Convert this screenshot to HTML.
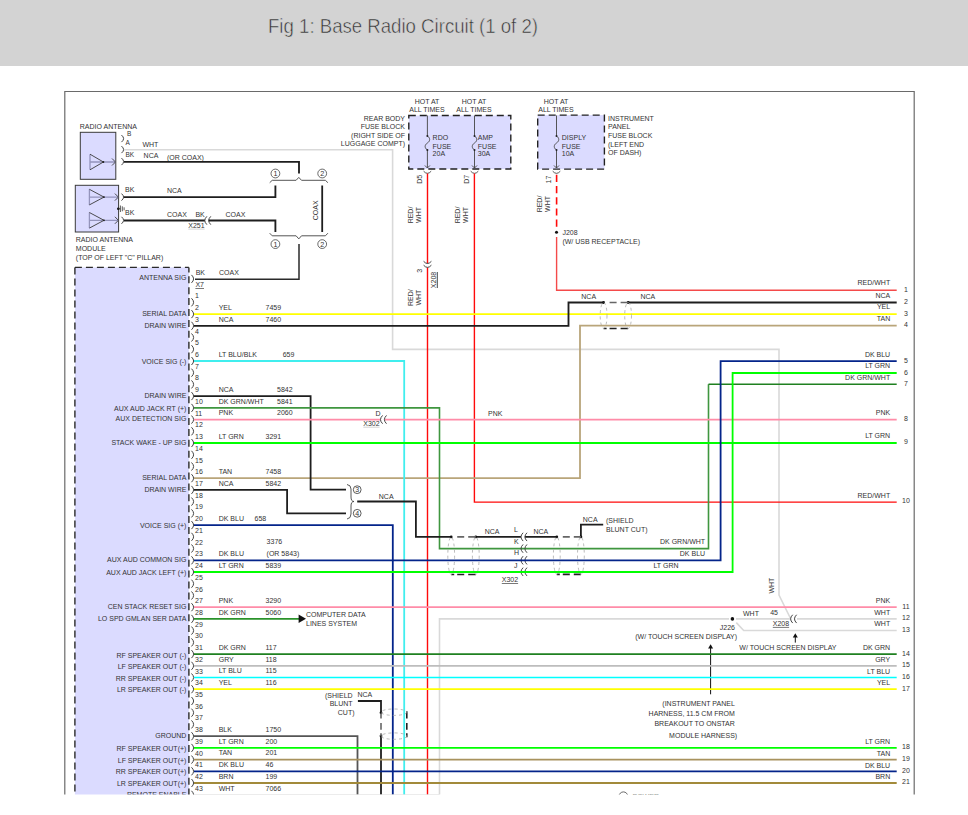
<!DOCTYPE html>
<html><head><meta charset="utf-8"><style>
html,body{margin:0;padding:0;background:#fff;width:968px;height:815px;overflow:hidden}
svg{display:block;font-family:"Liberation Sans",sans-serif}
</style></head><body>
<svg width="968" height="815" viewBox="0 0 968 815">
<defs><clipPath id="clip"><rect x="0" y="66" width="968" height="728.6"/></clipPath></defs>
<rect x="0" y="0" width="968" height="66" fill="#d3d3d3"/>
<text x="268" y="32.8" font-size="19.8" fill="#333" stroke="#d3d3d3" stroke-width="0.55" textLength="270" lengthAdjust="spacingAndGlyphs">Fig 1: Base Radio Circuit (1 of 2)</text>
<g clip-path="url(#clip)">
<path d="M64.8,795 V91.5 H914.2 V795" fill="none" stroke="#6a6a6a" stroke-width="1.2"/>
<text x="79.8" y="128.8" font-size="7" fill="#333">RADIO ANTENNA</text>
<rect x="80.3" y="132.3" width="35.5" height="47" fill="#dbdbff" stroke="#3a3a3a" stroke-width="1"/>
<rect x="75.3" y="185.3" width="43.3" height="46.7" fill="#dbdbff" stroke="#3a3a3a" stroke-width="1"/>
<path d="M90,154.2 V169.8 M90,162 H115.5" fill="none" stroke="#9494bc" stroke-width="1.3"/>
<path d="M90,154.2 L103.4,162 L90,169.8 M112.0,158.5 L115.5,162 L112.0,165.5" fill="none" stroke="#3a3a3a" stroke-width="0.9"/>
<circle cx="103.4" cy="162" r="0.9" fill="#222"/>
<path d="M89.4,189.29999999999998 V204.9 M89.4,197.1 H118.4" fill="none" stroke="#9494bc" stroke-width="1.3"/>
<path d="M89.4,189.29999999999998 L104,197.1 L89.4,204.9 M114.9,193.6 L118.4,197.1 L114.9,200.6" fill="none" stroke="#3a3a3a" stroke-width="0.9"/>
<circle cx="104" cy="197.1" r="0.9" fill="#222"/>
<path d="M89.4,212.5 V228.10000000000002 M89.4,220.3 H118.4" fill="none" stroke="#9494bc" stroke-width="1.3"/>
<path d="M89.4,212.5 L104,220.3 L89.4,228.10000000000002 M114.9,216.8 L118.4,220.3 L114.9,223.8" fill="none" stroke="#3a3a3a" stroke-width="0.9"/>
<circle cx="104" cy="220.3" r="0.9" fill="#222"/>
<circle cx="118.3" cy="208.8" r="1.3" fill="#111"/>
<path d="M118.3,208.8 H120.4 M120.4,205.5 V212 M122.3,206.3 V211.3 M124.1,207.3 V210.3" stroke="#333" stroke-width="0.8"/>
<path d="M121.5,135.1 Q125.7,138.6 121.5,142.1" fill="none" stroke="#444" stroke-width="1"/>
<path d="M121.5,146.1 Q125.7,149.6 121.5,153.1" fill="none" stroke="#444" stroke-width="1"/>
<path d="M121.5,158.1 Q125.7,161.6 121.5,165.1" fill="none" stroke="#444" stroke-width="1"/>
<path d="M121.5,193.6 Q125.7,197.1 121.5,200.6" fill="none" stroke="#444" stroke-width="1"/>
<path d="M121.5,216.8 Q125.7,220.3 121.5,223.8" fill="none" stroke="#444" stroke-width="1"/>
<text x="127.0" y="135.5" font-size="6.5" fill="#333">B</text>
<text x="125.5" y="145.0" font-size="6.5" fill="#333">A</text>
<text x="125.5" y="157.0" font-size="6.5" fill="#333">BK</text>
<text x="142.4" y="146.9" font-size="7" fill="#333">WHT</text>
<text x="143.6" y="157.7" font-size="7" fill="#333">NCA</text>
<text x="167.0" y="160.0" font-size="7" fill="#333">(OR COAX)</text>
<text x="125.0" y="191.5" font-size="7" fill="#333">BK</text>
<text x="167.0" y="192.6" font-size="7" fill="#333">NCA</text>
<text x="125.0" y="214.8" font-size="7" fill="#333">BK</text>
<text x="167.0" y="216.6" font-size="7" fill="#333">COAX</text>
<text x="195.4" y="216.6" font-size="7" fill="#333">BK</text>
<text x="188.3" y="227.6" font-size="7" fill="#333">X251</text>
<path d="M188.3,229.1 h16.3" stroke="#c8c8c8" stroke-width="0.8"/>
<text x="225.5" y="216.6" font-size="7" fill="#333">COAX</text>
<path d="M206.90,216.35 Q202.70,220.50 206.90,224.65" fill="none" stroke="#444" stroke-width="1"/>
<path d="M210.80,216.35 Q206.60,220.50 210.80,224.65" fill="none" stroke="#444" stroke-width="1"/>
<text x="75.8" y="242.0" font-size="7" fill="#333">RADIO ANTENNA</text>
<text x="75.8" y="250.7" font-size="7" fill="#333">MODULE</text>
<text x="75.8" y="259.6" font-size="7" fill="#333">(TOP OF LEFT "C" PILLAR)</text>
<path d="M124.0,149.7 L392.6,149.7 L392.6,349.4 L779.0,349.4 L779.0,595.0 L790.3,618.0" fill="none" stroke="#d9d9d9" stroke-width="1.6"/>
<path d="M124.0,161.9 L299.0,161.9 L299.0,173.5" fill="none" stroke="#1e1e1e" stroke-width="1.85"/>
<path d="M124.0,197.1 L275.4,197.1 L275.4,185.6" fill="none" stroke="#1e1e1e" stroke-width="1.85"/>
<path d="M124.0,220.5 L204.8,220.5" fill="none" stroke="#1e1e1e" stroke-width="1.85"/>
<path d="M208.6,220.5 L275.4,220.5 L275.4,232.0" fill="none" stroke="#1e1e1e" stroke-width="1.85"/>
<path d="M322.2,185.6 L322.2,232.0" fill="none" stroke="#1e1e1e" stroke-width="1.8"/>
<text transform="translate(317.5,210.3) rotate(-90)" text-anchor="middle" font-size="7" fill="#333">COAX</text>
<path d="M269.7,182.7 L272.2,180.3 H296.1 L298.8,177.4 L301.5,180.3 H325.4 L327.9,182.7" fill="none" stroke="#555" stroke-width="1"/>
<path d="M269.7,233.2 L272.2,235.8 H296.1 L298.8,238.9 L301.5,235.8 H325.4 L327.9,233.2" fill="none" stroke="#555" stroke-width="1"/>
<circle cx="275.4" cy="173.5" r="4.4" fill="none" stroke="#444" stroke-width="0.8"/>
<text x="275.4" y="176.1" text-anchor="middle" font-size="7.2" fill="#333">1</text>
<circle cx="322.2" cy="173.5" r="4.4" fill="none" stroke="#444" stroke-width="0.8"/>
<text x="322.2" y="176.1" text-anchor="middle" font-size="7.2" fill="#333">2</text>
<circle cx="275.4" cy="244.1" r="4.4" fill="none" stroke="#444" stroke-width="0.8"/>
<text x="275.4" y="246.7" text-anchor="middle" font-size="7.2" fill="#333">1</text>
<circle cx="322.2" cy="244.1" r="4.4" fill="none" stroke="#444" stroke-width="0.8"/>
<text x="322.2" y="246.7" text-anchor="middle" font-size="7.2" fill="#333">2</text>
<path d="M299.0,244.0 L299.0,279.3 L195.0,279.3" fill="none" stroke="#2a2a2a" stroke-width="1.5"/>
<rect x="74.9" y="267.4" width="114" height="560" fill="#dbdbff"/>
<path d="M74.9,267.4 H188.9" fill="none" stroke="#2a2a2a" stroke-width="1.4" stroke-dasharray="7,4"/>
<path d="M74.9,267.4 V830" fill="none" stroke="#2a2a2a" stroke-width="1.4" stroke-dasharray="7,4"/>
<path d="M188.9,267.4 V830" fill="none" stroke="#2a2a2a" stroke-width="1.4" stroke-dasharray="7,3.9" stroke-dashoffset="2"/>
<text x="186.4" y="280.4" text-anchor="end" font-size="7" fill="#333">ANTENNA SIG</text>
<path d="M191.5,274.9 Q195.7,278.9 191.5,282.9" fill="none" stroke="#444" stroke-width="1"/>
<text x="195.7" y="274.5" font-size="7" fill="#333">BK</text>
<text x="219.0" y="274.5" font-size="7" fill="#333">COAX</text>
<text x="195.4" y="287.0" font-size="7" fill="#333">X7</text>
<path d="M195.4,288.5 h8.6" stroke="#555" stroke-width="0.8"/>
<path d="M191.5,298.3 Q195.7,302.3 191.5,306.3" fill="none" stroke="#444" stroke-width="1"/>
<text x="195.0" y="298.3" font-size="7" fill="#333">1</text>
<path d="M191.5,310.1 Q195.7,314.1 191.5,318.1" fill="none" stroke="#444" stroke-width="1"/>
<text x="195.0" y="310.1" font-size="7" fill="#333">2</text>
<path d="M191.5,321.8 Q195.7,325.8 191.5,329.8" fill="none" stroke="#444" stroke-width="1"/>
<text x="195.0" y="321.8" font-size="7" fill="#333">3</text>
<path d="M191.5,333.5 Q195.7,337.5 191.5,341.5" fill="none" stroke="#444" stroke-width="1"/>
<text x="195.0" y="333.5" font-size="7" fill="#333">4</text>
<path d="M191.5,345.2 Q195.7,349.2 191.5,353.2" fill="none" stroke="#444" stroke-width="1"/>
<text x="195.0" y="345.2" font-size="7" fill="#333">5</text>
<path d="M191.5,357.0 Q195.7,361.0 191.5,365.0" fill="none" stroke="#444" stroke-width="1"/>
<text x="195.0" y="357.0" font-size="7" fill="#333">6</text>
<path d="M191.5,368.7 Q195.7,372.7 191.5,376.7" fill="none" stroke="#444" stroke-width="1"/>
<text x="195.0" y="368.7" font-size="7" fill="#333">7</text>
<path d="M191.5,380.4 Q195.7,384.4 191.5,388.4" fill="none" stroke="#444" stroke-width="1"/>
<text x="195.0" y="380.4" font-size="7" fill="#333">8</text>
<path d="M191.5,392.1 Q195.7,396.1 191.5,400.1" fill="none" stroke="#444" stroke-width="1"/>
<text x="195.0" y="392.1" font-size="7" fill="#333">9</text>
<path d="M191.5,403.9 Q195.7,407.9 191.5,411.9" fill="none" stroke="#444" stroke-width="1"/>
<text x="195.0" y="403.9" font-size="7" fill="#333">10</text>
<path d="M191.5,415.6 Q195.7,419.6 191.5,423.6" fill="none" stroke="#444" stroke-width="1"/>
<text x="195.0" y="415.6" font-size="7" fill="#333">11</text>
<path d="M191.5,427.3 Q195.7,431.3 191.5,435.3" fill="none" stroke="#444" stroke-width="1"/>
<text x="195.0" y="427.3" font-size="7" fill="#333">12</text>
<path d="M191.5,439.0 Q195.7,443.0 191.5,447.0" fill="none" stroke="#444" stroke-width="1"/>
<text x="195.0" y="439.0" font-size="7" fill="#333">13</text>
<path d="M191.5,450.8 Q195.7,454.8 191.5,458.8" fill="none" stroke="#444" stroke-width="1"/>
<text x="195.0" y="450.8" font-size="7" fill="#333">14</text>
<path d="M191.5,462.5 Q195.7,466.5 191.5,470.5" fill="none" stroke="#444" stroke-width="1"/>
<text x="195.0" y="462.5" font-size="7" fill="#333">15</text>
<path d="M191.5,474.2 Q195.7,478.2 191.5,482.2" fill="none" stroke="#444" stroke-width="1"/>
<text x="195.0" y="474.2" font-size="7" fill="#333">16</text>
<path d="M191.5,485.9 Q195.7,489.9 191.5,493.9" fill="none" stroke="#444" stroke-width="1"/>
<text x="195.0" y="485.9" font-size="7" fill="#333">17</text>
<path d="M191.5,497.6 Q195.7,501.6 191.5,505.6" fill="none" stroke="#444" stroke-width="1"/>
<text x="195.0" y="497.6" font-size="7" fill="#333">18</text>
<path d="M191.5,509.4 Q195.7,513.4 191.5,517.4" fill="none" stroke="#444" stroke-width="1"/>
<text x="195.0" y="509.4" font-size="7" fill="#333">19</text>
<path d="M191.5,521.1 Q195.7,525.1 191.5,529.1" fill="none" stroke="#444" stroke-width="1"/>
<text x="195.0" y="521.1" font-size="7" fill="#333">20</text>
<path d="M191.5,532.8 Q195.7,536.8 191.5,540.8" fill="none" stroke="#444" stroke-width="1"/>
<text x="195.0" y="532.8" font-size="7" fill="#333">21</text>
<path d="M191.5,544.5 Q195.7,548.5 191.5,552.5" fill="none" stroke="#444" stroke-width="1"/>
<text x="195.0" y="544.5" font-size="7" fill="#333">22</text>
<path d="M191.5,556.3 Q195.7,560.3 191.5,564.3" fill="none" stroke="#444" stroke-width="1"/>
<text x="195.0" y="556.3" font-size="7" fill="#333">23</text>
<path d="M191.5,568.0 Q195.7,572.0 191.5,576.0" fill="none" stroke="#444" stroke-width="1"/>
<text x="195.0" y="568.0" font-size="7" fill="#333">24</text>
<path d="M191.5,579.7 Q195.7,583.7 191.5,587.7" fill="none" stroke="#444" stroke-width="1"/>
<text x="195.0" y="579.7" font-size="7" fill="#333">25</text>
<path d="M191.5,591.5 Q195.7,595.5 191.5,599.5" fill="none" stroke="#444" stroke-width="1"/>
<text x="195.0" y="591.5" font-size="7" fill="#333">26</text>
<path d="M191.5,603.2 Q195.7,607.2 191.5,611.2" fill="none" stroke="#444" stroke-width="1"/>
<text x="195.0" y="603.2" font-size="7" fill="#333">27</text>
<path d="M191.5,614.9 Q195.7,618.9 191.5,622.9" fill="none" stroke="#444" stroke-width="1"/>
<text x="195.0" y="614.9" font-size="7" fill="#333">28</text>
<path d="M191.5,626.6 Q195.7,630.6 191.5,634.6" fill="none" stroke="#444" stroke-width="1"/>
<text x="195.0" y="626.6" font-size="7" fill="#333">29</text>
<path d="M191.5,638.4 Q195.7,642.4 191.5,646.4" fill="none" stroke="#444" stroke-width="1"/>
<text x="195.0" y="638.4" font-size="7" fill="#333">30</text>
<path d="M191.5,650.1 Q195.7,654.1 191.5,658.1" fill="none" stroke="#444" stroke-width="1"/>
<text x="195.0" y="650.1" font-size="7" fill="#333">31</text>
<path d="M191.5,661.8 Q195.7,665.8 191.5,669.8" fill="none" stroke="#444" stroke-width="1"/>
<text x="195.0" y="661.8" font-size="7" fill="#333">32</text>
<path d="M191.5,673.5 Q195.7,677.5 191.5,681.5" fill="none" stroke="#444" stroke-width="1"/>
<text x="195.0" y="673.5" font-size="7" fill="#333">33</text>
<path d="M191.5,685.2 Q195.7,689.2 191.5,693.2" fill="none" stroke="#444" stroke-width="1"/>
<text x="195.0" y="685.2" font-size="7" fill="#333">34</text>
<path d="M191.5,697.0 Q195.7,701.0 191.5,705.0" fill="none" stroke="#444" stroke-width="1"/>
<text x="195.0" y="697.0" font-size="7" fill="#333">35</text>
<path d="M191.5,708.7 Q195.7,712.7 191.5,716.7" fill="none" stroke="#444" stroke-width="1"/>
<text x="195.0" y="708.7" font-size="7" fill="#333">36</text>
<path d="M191.5,720.4 Q195.7,724.4 191.5,728.4" fill="none" stroke="#444" stroke-width="1"/>
<text x="195.0" y="720.4" font-size="7" fill="#333">37</text>
<path d="M191.5,732.2 Q195.7,736.2 191.5,740.2" fill="none" stroke="#444" stroke-width="1"/>
<text x="195.0" y="732.2" font-size="7" fill="#333">38</text>
<path d="M191.5,743.9 Q195.7,747.9 191.5,751.9" fill="none" stroke="#444" stroke-width="1"/>
<text x="195.0" y="743.9" font-size="7" fill="#333">39</text>
<path d="M191.5,755.6 Q195.7,759.6 191.5,763.6" fill="none" stroke="#444" stroke-width="1"/>
<text x="195.0" y="755.6" font-size="7" fill="#333">40</text>
<path d="M191.5,767.3 Q195.7,771.3 191.5,775.3" fill="none" stroke="#444" stroke-width="1"/>
<text x="195.0" y="767.3" font-size="7" fill="#333">41</text>
<path d="M191.5,779.0 Q195.7,783.0 191.5,787.0" fill="none" stroke="#444" stroke-width="1"/>
<text x="195.0" y="779.0" font-size="7" fill="#333">42</text>
<path d="M191.5,790.8 Q195.7,794.8 191.5,798.8" fill="none" stroke="#444" stroke-width="1"/>
<text x="195.0" y="790.8" font-size="7" fill="#333">43</text>
<text x="186.4" y="316.2" text-anchor="end" font-size="7" fill="#333">SERIAL DATA</text>
<text x="186.4" y="328.0" text-anchor="end" font-size="7" fill="#333">DRAIN WIRE</text>
<text x="186.4" y="364.3" text-anchor="end" font-size="7" fill="#333">VOICE SIG (-)</text>
<text x="186.4" y="398.3" text-anchor="end" font-size="7" fill="#333">DRAIN WIRE</text>
<text x="186.4" y="411.2" text-anchor="end" font-size="7" fill="#333">AUX AUD JACK RT (+)</text>
<text x="186.4" y="420.5" text-anchor="end" font-size="7" fill="#333">AUX DETECTION SIG</text>
<text x="186.4" y="445.2" text-anchor="end" font-size="7" fill="#333">STACK WAKE - UP SIG</text>
<text x="186.4" y="480.4" text-anchor="end" font-size="7" fill="#333">SERIAL DATA</text>
<text x="186.4" y="492.1" text-anchor="end" font-size="7" fill="#333">DRAIN WIRE</text>
<text x="186.4" y="528.1" text-anchor="end" font-size="7" fill="#333">VOICE SIG (+)</text>
<text x="186.4" y="561.5" text-anchor="end" font-size="7" fill="#333">AUX AUD COMMON SIG</text>
<text x="186.4" y="575.2" text-anchor="end" font-size="7" fill="#333">AUX AUD JACK LEFT (+)</text>
<text x="186.4" y="609.4" text-anchor="end" font-size="7" fill="#333">CEN STACK RESET SIG</text>
<text x="186.4" y="621.1" text-anchor="end" font-size="7" fill="#333">LO SPD GMLAN SER DATA</text>
<text x="186.4" y="657.5" text-anchor="end" font-size="7" fill="#333">RF SPEAKER OUT (-)</text>
<text x="186.4" y="669.0" text-anchor="end" font-size="7" fill="#333">LF SPEAKER OUT (-)</text>
<text x="186.4" y="680.9" text-anchor="end" font-size="7" fill="#333">RR SPEAKER OUT (-)</text>
<text x="186.4" y="691.8" text-anchor="end" font-size="7" fill="#333">LR SPEAKER OUT (-)</text>
<text x="186.4" y="738.4" text-anchor="end" font-size="7" fill="#333">GROUND</text>
<text x="186.4" y="751.1" text-anchor="end" font-size="7" fill="#333">RF SPEAKER OUT(+)</text>
<text x="186.4" y="763.0" text-anchor="end" font-size="7" fill="#333">LF SPEAKER OUT(+)</text>
<text x="186.4" y="773.8" text-anchor="end" font-size="7" fill="#333">RR SPEAKER OUT(+)</text>
<text x="186.4" y="786.2" text-anchor="end" font-size="7" fill="#333">LR SPEAKER OUT(+)</text>
<text x="186.4" y="797.0" text-anchor="end" font-size="7" fill="#333">REMOTE ENABLE</text>
<text x="218.7" y="309.9" font-size="7" fill="#333">YEL</text>
<text x="265.5" y="309.9" font-size="7" fill="#333">7459</text>
<text x="218.7" y="321.6" font-size="7" fill="#333">NCA</text>
<text x="265.5" y="321.6" font-size="7" fill="#333">7460</text>
<text x="218.7" y="356.8" font-size="7" fill="#333">LT BLU/BLK</text>
<text x="282.7" y="356.8" font-size="7" fill="#333">659</text>
<text x="218.7" y="391.9" font-size="7" fill="#333">NCA</text>
<text x="277.0" y="391.9" font-size="7" fill="#333">5842</text>
<text x="218.7" y="403.7" font-size="7" fill="#333">DK GRN/WHT</text>
<text x="277.0" y="403.7" font-size="7" fill="#333">5841</text>
<text x="218.7" y="415.4" font-size="7" fill="#333">PNK</text>
<text x="277.0" y="415.4" font-size="7" fill="#333">2060</text>
<text x="218.7" y="438.8" font-size="7" fill="#333">LT GRN</text>
<text x="265.5" y="438.8" font-size="7" fill="#333">3291</text>
<text x="218.7" y="474.0" font-size="7" fill="#333">TAN</text>
<text x="265.5" y="474.0" font-size="7" fill="#333">7458</text>
<text x="218.7" y="485.7" font-size="7" fill="#333">NCA</text>
<text x="265.5" y="485.7" font-size="7" fill="#333">5842</text>
<text x="218.7" y="520.9" font-size="7" fill="#333">DK BLU</text>
<text x="254.5" y="520.9" font-size="7" fill="#333">658</text>
<text x="266.6" y="544.3" font-size="7" fill="#333">3376</text>
<text x="218.7" y="556.1" font-size="7" fill="#333">DK BLU</text>
<text x="266.6" y="556.1" font-size="7" fill="#333">(OR 5843)</text>
<text x="218.7" y="567.8" font-size="7" fill="#333">LT GRN</text>
<text x="265.5" y="567.8" font-size="7" fill="#333">5839</text>
<text x="218.7" y="603.0" font-size="7" fill="#333">PNK</text>
<text x="265.5" y="603.0" font-size="7" fill="#333">3290</text>
<text x="218.7" y="614.7" font-size="7" fill="#333">DK GRN</text>
<text x="265.5" y="614.7" font-size="7" fill="#333">5060</text>
<text x="218.7" y="649.9" font-size="7" fill="#333">DK GRN</text>
<text x="265.5" y="649.9" font-size="7" fill="#333">117</text>
<text x="218.7" y="661.6" font-size="7" fill="#333">GRY</text>
<text x="265.5" y="661.6" font-size="7" fill="#333">118</text>
<text x="218.7" y="673.3" font-size="7" fill="#333">LT BLU</text>
<text x="265.5" y="673.3" font-size="7" fill="#333">115</text>
<text x="218.7" y="685.0" font-size="7" fill="#333">YEL</text>
<text x="265.5" y="685.0" font-size="7" fill="#333">116</text>
<text x="218.7" y="732.0" font-size="7" fill="#333">BLK</text>
<text x="265.5" y="732.0" font-size="7" fill="#333">1750</text>
<text x="218.7" y="743.7" font-size="7" fill="#333">LT GRN</text>
<text x="265.5" y="743.7" font-size="7" fill="#333">200</text>
<text x="218.7" y="755.4" font-size="7" fill="#333">TAN</text>
<text x="265.5" y="755.4" font-size="7" fill="#333">201</text>
<text x="218.7" y="767.1" font-size="7" fill="#333">DK BLU</text>
<text x="265.5" y="767.1" font-size="7" fill="#333">46</text>
<text x="218.7" y="778.8" font-size="7" fill="#333">BRN</text>
<text x="265.5" y="778.8" font-size="7" fill="#333">199</text>
<text x="218.7" y="790.6" font-size="7" fill="#333">WHT</text>
<text x="265.5" y="790.6" font-size="7" fill="#333">7066</text>
<rect x="408.8" y="115.5" width="102" height="53.5" fill="#dbdbff" stroke="#222" stroke-width="1.4" stroke-dasharray="7,4"/>
<rect x="537.7" y="115.1" width="66.7" height="54" fill="#dbdbff" stroke="#222" stroke-width="1.4" stroke-dasharray="7,4"/>
<path d="M427.4,115.5 V136 C430.4,138 430.4,141 427.4,143 C424.4,145 424.4,148 427.4,150 V168 M424.9,165.5 L427.4,168 L429.9,165.5" fill="none" stroke="#444" stroke-width="0.9"/>
<circle cx="427.4" cy="136" r="1" fill="#222"/><circle cx="427.4" cy="150" r="1" fill="#222"/>
<path d="M474.5,115.5 V136 C477.5,138 477.5,141 474.5,143 C471.5,145 471.5,148 474.5,150 V168 M472.0,165.5 L474.5,168 L477.0,165.5" fill="none" stroke="#444" stroke-width="0.9"/>
<circle cx="474.5" cy="136" r="1" fill="#222"/><circle cx="474.5" cy="150" r="1" fill="#222"/>
<path d="M556.5,115.5 V136 C559.5,138 559.5,141 556.5,143 C553.5,145 553.5,148 556.5,150 V168 M554.0,165.5 L556.5,168 L559.0,165.5" fill="none" stroke="#444" stroke-width="0.9"/>
<circle cx="556.5" cy="136" r="1" fill="#222"/><circle cx="556.5" cy="150" r="1" fill="#222"/>
<text x="427.0" y="104.0" text-anchor="middle" font-size="7" fill="#333">HOT AT</text>
<text x="427.0" y="111.8" text-anchor="middle" font-size="7" fill="#333">ALL TIMES</text>
<text x="474.0" y="104.0" text-anchor="middle" font-size="7" fill="#333">HOT AT</text>
<text x="474.0" y="111.8" text-anchor="middle" font-size="7" fill="#333">ALL TIMES</text>
<text x="556.0" y="104.0" text-anchor="middle" font-size="7" fill="#333">HOT AT</text>
<text x="556.0" y="111.8" text-anchor="middle" font-size="7" fill="#333">ALL TIMES</text>
<text x="405.0" y="120.7" text-anchor="end" font-size="7" fill="#333">REAR BODY</text>
<text x="405.0" y="129.3" text-anchor="end" font-size="7" fill="#333">FUSE BLOCK</text>
<text x="405.0" y="137.6" text-anchor="end" font-size="7" fill="#333">(RIGHT SIDE OF</text>
<text x="405.0" y="146.3" text-anchor="end" font-size="7" fill="#333">LUGGAGE COMPT)</text>
<text x="432.6" y="139.8" font-size="7" fill="#333">RDO</text>
<text x="432.6" y="148.6" font-size="7" fill="#333">FUSE</text>
<text x="432.6" y="156.0" font-size="7" fill="#333">20A</text>
<text x="477.8" y="139.8" font-size="7" fill="#333">AMP</text>
<text x="477.8" y="148.6" font-size="7" fill="#333">FUSE</text>
<text x="477.8" y="156.0" font-size="7" fill="#333">30A</text>
<text x="561.8" y="140.0" font-size="7" fill="#333">DISPLY</text>
<text x="561.8" y="148.9" font-size="7" fill="#333">FUSE</text>
<text x="561.8" y="155.8" font-size="7" fill="#333">10A</text>
<text x="608.0" y="120.8" font-size="7" fill="#333">INSTRUMENT</text>
<text x="608.0" y="129.3" font-size="7" fill="#333">PANEL</text>
<text x="608.0" y="137.7" font-size="7" fill="#333">FUSE BLOCK</text>
<text x="608.0" y="146.5" font-size="7" fill="#333">(LEFT END</text>
<text x="608.0" y="155.4" font-size="7" fill="#333">OF DASH)</text>
<path d="M423.59999999999997,171.2 Q427.4,175.5 431.2,171.2" fill="none" stroke="#444" stroke-width="0.9"/>
<path d="M470.7,171.2 Q474.5,175.5 478.3,171.2" fill="none" stroke="#444" stroke-width="0.9"/>
<path d="M552.7,171.2 Q556.5,175.5 560.3,171.2" fill="none" stroke="#444" stroke-width="0.9"/>
<text transform="translate(422.0,179.3) rotate(-90)" text-anchor="middle" font-size="7" fill="#333">D5</text>
<text transform="translate(469.0,179.3) rotate(-90)" text-anchor="middle" font-size="7" fill="#333">D7</text>
<text transform="translate(550.5,179.6) rotate(-90)" text-anchor="middle" font-size="7" fill="#333">17</text>
<text transform="translate(413.0,215.0) rotate(-90)" text-anchor="middle" font-size="7" fill="#333">RED/</text>
<text transform="translate(420.5,215.0) rotate(-90)" text-anchor="middle" font-size="7" fill="#333">WHT</text>
<text transform="translate(460.0,215.0) rotate(-90)" text-anchor="middle" font-size="7" fill="#333">RED/</text>
<text transform="translate(467.5,215.0) rotate(-90)" text-anchor="middle" font-size="7" fill="#333">WHT</text>
<text transform="translate(542.0,204.0) rotate(-90)" text-anchor="middle" font-size="7" fill="#333">RED/</text>
<text transform="translate(550.0,204.0) rotate(-90)" text-anchor="middle" font-size="7" fill="#333">WHT</text>
<text transform="translate(413.0,297.6) rotate(-90)" text-anchor="middle" font-size="7" fill="#333">RED/</text>
<text transform="translate(420.5,297.6) rotate(-90)" text-anchor="middle" font-size="7" fill="#333">WHT</text>
<path d="M427.5,173.5 L427.5,263.5" fill="none" stroke="#ff0a0a" stroke-width="1.4"/>
<path d="M427.5,267.4 L427.5,800.0" fill="none" stroke="#ff0a0a" stroke-width="1.4"/>
<path d="M423.60,261.30 Q427.50,265.70 431.40,261.30" fill="none" stroke="#444" stroke-width="1"/>
<path d="M423.60,265.20 Q427.50,269.60 431.40,265.20" fill="none" stroke="#444" stroke-width="1"/>
<text transform="translate(422.0,270.7) rotate(-90)" text-anchor="middle" font-size="7" fill="#333">3</text>
<g transform="translate(435.5,280) rotate(-90)"><text x="0" y="0" text-anchor="middle" font-size="7" fill="#333">X208</text><path d="M-8,1.8 h16" stroke="#333" stroke-width="0.9"/></g>
<path d="M474.4,173.5 L474.4,502.1 L896.7,502.1" fill="none" stroke="#ff0a0a" stroke-width="1.4"/>
<path d="M556.6,174.8 L556.6,227.0" fill="none" stroke="#ff0a0a" stroke-width="1.6" stroke-dasharray="7.2,4"/>
<circle cx="556.5" cy="232.3" r="1.5" fill="#111"/>
<path d="M556.6,237.0 L556.6,290.3 L896.7,290.3" fill="none" stroke="#f44a4a" stroke-width="1.4"/>
<text x="562.4" y="235.0" font-size="7" fill="#333">J208</text>
<text x="562.4" y="243.8" font-size="7" fill="#333">(W/ USB RECEPTACLE)</text>
<path d="M194.0,314.1 L896.7,314.1" fill="none" stroke="#ffff00" stroke-width="1.8"/>
<path d="M194.0,325.8 L568.5,325.8 L568.5,302.5 L603.6,302.5" fill="none" stroke="#1e1e1e" stroke-width="1.85"/>
<path d="M628.1,302.5 L896.7,302.5" fill="none" stroke="#1e1e1e" stroke-width="1.85"/>
<circle cx="603.6" cy="302.5" r="1.4" fill="#111"/><circle cx="628.1" cy="302.5" r="1.4" fill="#111"/>
<path d="M609.6,302.5 H616.6 M620.6,302.5 H628.1" stroke="#666" stroke-width="1.6"/>
<path d="M603.6,328.5 H606.6 M609.6,328.5 H616.6 M620.6,328.5 H628.1" stroke="#222" stroke-width="1.6"/>
<ellipse cx="603.6" cy="315.5" rx="3.4" ry="13.0" fill="none" stroke="#aaa" stroke-width="0.8" stroke-dasharray="3,3"/>
<ellipse cx="628.1" cy="315.5" rx="3.4" ry="13.0" fill="none" stroke="#aaa" stroke-width="0.8" stroke-dasharray="3,3"/>
<text x="581.3" y="298.8" font-size="7" fill="#333">NCA</text>
<text x="640.4" y="298.8" font-size="7" fill="#333">NCA</text>
<path d="M896.7,325.6 L580.0,325.6 L580.0,478.2 L194.0,478.2" fill="none" stroke="#b9a57a" stroke-width="1.8"/>
<path d="M194.0,361.0 L404.2,361.0 L404.2,800.0" fill="none" stroke="#40eeee" stroke-width="1.8"/>
<path d="M194.0,396.1 L310.6,396.1 L310.6,489.7 L346.0,489.7" fill="none" stroke="#1e1e1e" stroke-width="1.8"/>
<path d="M194.0,407.9 L439.5,407.9 L439.5,548.6 L708.5,548.6 L708.5,384.3" fill="none" stroke="#3f963f" stroke-width="1.6"/>
<path d="M708.5,384.3 L896.7,384.3" fill="none" stroke="#1f8020" stroke-width="1.6"/>
<path d="M194.0,419.6 L380.5,419.6" fill="none" stroke="#ff8ca8" stroke-width="1.8"/>
<path d="M384.4,419.6 L896.7,419.6" fill="none" stroke="#ff8ca8" stroke-width="1.8"/>
<path d="M382.60,415.43 Q378.40,419.58 382.60,423.73" fill="none" stroke="#444" stroke-width="1"/>
<path d="M386.50,415.43 Q382.30,419.58 386.50,423.73" fill="none" stroke="#444" stroke-width="1"/>
<text x="375.4" y="415.5" font-size="7" fill="#333">D</text>
<text x="363.3" y="425.7" font-size="7" fill="#333">X302</text>
<path d="M363.3,427.2 h16.3" stroke="#c8c8c8" stroke-width="0.8"/>
<text x="488.0" y="415.5" font-size="7" fill="#333">PNK</text>
<path d="M194.0,443.0 L896.7,443.0" fill="none" stroke="#00ff00" stroke-width="1.8"/>
<path d="M194.0,489.9 L287.1,489.9 L287.1,513.3 L346.0,513.3" fill="none" stroke="#1e1e1e" stroke-width="1.8"/>
<path d="M347,484.5 Q351,485 351,489 V497 Q351,501.5 354,501.5 Q351,501.5 351,506 V514 Q351,518.5 347,519" fill="none" stroke="#444" stroke-width="0.9"/>
<circle cx="357.2" cy="489.7" r="3.9" fill="white" stroke="#333" stroke-width="0.8"/>
<text x="357.2" y="492.2" text-anchor="middle" font-size="7" fill="#333">3</text>
<circle cx="357.2" cy="513.3" r="3.9" fill="white" stroke="#333" stroke-width="0.8"/>
<text x="357.2" y="515.8" text-anchor="middle" font-size="7" fill="#333">4</text>
<path d="M357.2,501.5 L415.9,501.5 L415.9,536.9 L451.2,536.9" fill="none" stroke="#1e1e1e" stroke-width="1.8"/>
<path d="M580.9,536.9 L580.9,524.7 L603.2,524.7" fill="none" stroke="#1e1e1e" stroke-width="1.8"/>
<path d="M475.8,536.9 L521.0,536.9" fill="none" stroke="#1e1e1e" stroke-width="1.8"/>
<path d="M524.9,536.9 L556.8,536.9" fill="none" stroke="#1e1e1e" stroke-width="1.8"/>
<circle cx="451.2" cy="536.9" r="1.4" fill="#111"/><circle cx="475.8" cy="536.9" r="1.4" fill="#111"/>
<path d="M457.2,536.9 H464.2 M468.2,536.9 H475.8" stroke="#666" stroke-width="1.6"/>
<path d="M451.2,574.5 H454.2 M457.2,574.5 H464.2 M468.2,574.5 H475.8" stroke="#222" stroke-width="1.6"/>
<ellipse cx="451.2" cy="555.7" rx="3.4" ry="18.8" fill="none" stroke="#aaa" stroke-width="0.8" stroke-dasharray="3,3"/>
<ellipse cx="475.8" cy="555.7" rx="3.4" ry="18.8" fill="none" stroke="#aaa" stroke-width="0.8" stroke-dasharray="3,3"/>
<circle cx="556.8" cy="536.9" r="1.4" fill="#111"/><circle cx="580.9" cy="536.9" r="1.4" fill="#111"/>
<path d="M562.8,536.9 H569.8 M573.8,536.9 H580.9" stroke="#666" stroke-width="1.6"/>
<path d="M556.8,574.4 H559.8 M562.8,574.4 H569.8 M573.8,574.4 H580.9" stroke="#222" stroke-width="1.6"/>
<ellipse cx="556.8" cy="555.6" rx="3.4" ry="18.8" fill="none" stroke="#aaa" stroke-width="0.8" stroke-dasharray="3,3"/>
<ellipse cx="580.9" cy="555.6" rx="3.4" ry="18.8" fill="none" stroke="#aaa" stroke-width="0.8" stroke-dasharray="3,3"/>
<text x="378.8" y="498.6" font-size="7" fill="#333">NCA</text>
<text x="484.7" y="533.7" font-size="7" fill="#333">NCA</text>
<text x="533.4" y="533.7" font-size="7" fill="#333">NCA</text>
<text x="582.8" y="521.9" font-size="7" fill="#333">NCA</text>
<text x="606.0" y="522.7" font-size="7" fill="#333">(SHIELD</text>
<text x="606.0" y="531.6" font-size="7" fill="#333">BLUNT CUT)</text>
<text x="513.9" y="532.4" font-size="7" fill="#333">L</text>
<text x="513.9" y="543.9" font-size="7" fill="#333">K</text>
<text x="513.9" y="554.7" font-size="7" fill="#333">H</text>
<text x="513.9" y="567.7" font-size="7" fill="#333">J</text>
<path d="M523.10,532.75 Q518.90,536.90 523.10,541.05" fill="none" stroke="#444" stroke-width="1"/>
<path d="M527.00,532.75 Q522.80,536.90 527.00,541.05" fill="none" stroke="#444" stroke-width="1"/>
<path d="M523.10,544.45 Q518.90,548.60 523.10,552.75" fill="none" stroke="#444" stroke-width="1"/>
<path d="M527.00,544.45 Q522.80,548.60 527.00,552.75" fill="none" stroke="#444" stroke-width="1"/>
<path d="M523.10,556.15 Q518.90,560.30 523.10,564.45" fill="none" stroke="#444" stroke-width="1"/>
<path d="M527.00,556.15 Q522.80,560.30 527.00,564.45" fill="none" stroke="#444" stroke-width="1"/>
<path d="M523.10,567.65 Q518.90,571.80 523.10,575.95" fill="none" stroke="#444" stroke-width="1"/>
<path d="M527.00,567.65 Q522.80,571.80 527.00,575.95" fill="none" stroke="#444" stroke-width="1"/>
<text x="501.8" y="582.0" font-size="7" fill="#333">X302</text>
<path d="M501.8,583.5 h16.3" stroke="#555" stroke-width="0.8"/>
<path d="M194.0,525.1 L392.8,525.1 L392.8,800.0" fill="none" stroke="#04248a" stroke-width="1.8"/>
<path d="M194.0,560.3 L720.6,560.3 L720.6,361.2 L896.7,361.2" fill="none" stroke="#04248a" stroke-width="1.8"/>
<path d="M194.0,572.0 L732.6,572.0 L732.6,373.0 L896.7,373.0" fill="none" stroke="#00ff00" stroke-width="1.8"/>
<text x="705.1" y="543.7" text-anchor="end" font-size="7" fill="#333">DK GRN/WHT</text>
<text x="705.1" y="555.8" text-anchor="end" font-size="7" fill="#333">DK BLU</text>
<text x="678.5" y="567.9" text-anchor="end" font-size="7" fill="#333">LT GRN</text>
<path d="M194.0,607.2 L896.7,607.2" fill="none" stroke="#ff8ca8" stroke-width="1.8"/>
<path d="M194.0,618.9 L300.0,618.9" fill="none" stroke="#2a922a" stroke-width="1.8"/>
<path d="M298.6,614.4 L306,618.7 L298.6,623 Z" fill="#111"/>
<text x="306.0" y="616.6" font-size="7" fill="#333">COMPUTER DATA</text>
<text x="306.0" y="625.6" font-size="7" fill="#333">LINES SYSTEM</text>
<path d="M439.5,794.8 L439.5,618.9 L729.0,618.9" fill="none" stroke="#d9d9d9" stroke-width="1.6"/>
<path d="M736.0,618.9 L790.0,618.9" fill="none" stroke="#d9d9d9" stroke-width="1.6"/>
<path d="M797.0,618.9 L896.7,618.9" fill="none" stroke="#d9d9d9" stroke-width="1.6"/>
<path d="M736.3,622.6 L743.7,630.5 L896.7,630.5" fill="none" stroke="#d9d9d9" stroke-width="1.6"/>
<circle cx="732.4" cy="618.9" r="1.8" fill="#111"/>
<path d="M792.70,614.75 Q788.50,618.90 792.70,623.05" fill="none" stroke="#444" stroke-width="1"/>
<path d="M796.60,614.75 Q792.40,618.90 796.60,623.05" fill="none" stroke="#444" stroke-width="1"/>
<text x="743.0" y="615.7" font-size="7" fill="#333">WHT</text>
<text x="770.2" y="614.6" font-size="7" fill="#333">45</text>
<text x="772.8" y="625.9" font-size="7" fill="#333">X208</text>
<path d="M772.8,627.4 h16.3" stroke="#555" stroke-width="0.8"/>
<text x="735.0" y="629.6" text-anchor="end" font-size="7" fill="#333">J226</text>
<text x="737.1" y="639.0" text-anchor="end" font-size="7" fill="#333">(W/ TOUCH SCREEN DISPLAY)</text>
<text transform="translate(774.0,585.6) rotate(-90)" text-anchor="middle" font-size="7" fill="#333">WHT</text>
<path d="M795.3,642.6 L795.3,636.0" fill="none" stroke="#111" stroke-width="1"/>
<path d="M792.8,637.5 L795.3,633.3 L797.8,637.5 Z" fill="#111"/>
<text x="739.3" y="650.0" font-size="7" fill="#333">W/ TOUCH SCREEN DISPLAY</text>
<path d="M710.6,694.3 L710.6,647.0" fill="none" stroke="#111" stroke-width="1"/>
<path d="M708.1,648.5 L710.6,644.3 L713.1,648.5 Z" fill="#111"/>
<text x="734.8" y="705.8" text-anchor="end" font-size="7" fill="#333">(INSTRUMENT PANEL</text>
<text x="734.8" y="715.6" text-anchor="end" font-size="7" fill="#333">HARNESS, 11.5 CM FROM</text>
<text x="734.8" y="725.7" text-anchor="end" font-size="7" fill="#333">BREAKOUT TO ONSTAR</text>
<text x="737.2" y="737.8" text-anchor="end" font-size="7" fill="#333">MODULE HARNESS)</text>
<path d="M194.0,654.1 L896.7,654.1" fill="none" stroke="#1f8020" stroke-width="1.8"/>
<path d="M194.0,665.8 L896.7,665.8" fill="none" stroke="#bdbdbd" stroke-width="1.8"/>
<path d="M194.0,677.5 L896.7,677.5" fill="none" stroke="#00ffff" stroke-width="1.6"/>
<path d="M194.0,689.2 L896.7,689.2" fill="none" stroke="#ffff00" stroke-width="1.8"/>
<text x="352.6" y="697.9" text-anchor="end" font-size="7" fill="#333">(SHIELD</text>
<text x="352.6" y="706.0" text-anchor="end" font-size="7" fill="#333">BLUNT</text>
<text x="354.5" y="714.7" text-anchor="end" font-size="7" fill="#333">CUT)</text>
<text x="357.5" y="696.9" font-size="7" fill="#333">NCA</text>
<path d="M357.9,701.0 L381.0,701.0 L381.0,712.8" fill="none" stroke="#1e1e1e" stroke-width="1.8"/>
<circle cx="381" cy="712.8" r="1.4" fill="#111"/><circle cx="381" cy="736.1" r="1.4" fill="#111"/>
<path d="M381,713.4 V718.6 M381,722.9 V729.7 M381,733.3 V736.1" stroke="#666" stroke-width="1.6"/>
<path d="M381.0,736.1 L381.0,800.0" fill="none" stroke="#1e1e1e" stroke-width="1.8"/>
<path d="M406.8,711.3 V718.6 M406.8,722.9 V729.7 M406.8,733.3 V737.3" stroke="#222" stroke-width="1.6"/>
<ellipse cx="394" cy="712.2" rx="13" ry="3.2" fill="none" stroke="#aaa" stroke-width="0.8" stroke-dasharray="3,3"/>
<ellipse cx="394" cy="736.1" rx="13" ry="3.2" fill="none" stroke="#aaa" stroke-width="0.8" stroke-dasharray="3,3"/>
<path d="M194.0,736.2 L357.5,736.2 L357.5,800.0" fill="none" stroke="#555" stroke-width="1.8"/>
<path d="M194.0,747.9 L896.7,747.9" fill="none" stroke="#00ff00" stroke-width="1.8"/>
<path d="M194.0,759.6 L896.7,759.6" fill="none" stroke="#a8925e" stroke-width="1.7"/>
<path d="M194.0,771.3 L896.7,771.3" fill="none" stroke="#04248a" stroke-width="1.8"/>
<path d="M194.0,783.0 L896.7,783.0" fill="none" stroke="#a28a3a" stroke-width="1.8"/>
<path d="M194.0,794.8 L439.5,794.8" fill="none" stroke="#d9d9d9" stroke-width="1.6"/>
<circle cx="623.4" cy="796.3" r="4.4" fill="none" stroke="#444" stroke-width="0.8"/>
<text x="632.5" y="798.6" font-size="7" fill="#333">POWER</text>
<text x="890.2" y="285.4" text-anchor="end" font-size="7" fill="#333">RED/WHT</text>
<text x="906.0" y="291.8" text-anchor="middle" font-size="7" fill="#333">1</text>
<text x="890.2" y="297.6" text-anchor="end" font-size="7" fill="#333">NCA</text>
<text x="906.0" y="304.0" text-anchor="middle" font-size="7" fill="#333">2</text>
<text x="890.2" y="309.3" text-anchor="end" font-size="7" fill="#333">YEL</text>
<text x="906.0" y="315.6" text-anchor="middle" font-size="7" fill="#333">3</text>
<text x="890.2" y="320.8" text-anchor="end" font-size="7" fill="#333">TAN</text>
<text x="906.0" y="327.1" text-anchor="middle" font-size="7" fill="#333">4</text>
<text x="890.2" y="356.5" text-anchor="end" font-size="7" fill="#333">DK BLU</text>
<text x="906.0" y="362.7" text-anchor="middle" font-size="7" fill="#333">5</text>
<text x="890.2" y="368.3" text-anchor="end" font-size="7" fill="#333">LT GRN</text>
<text x="906.0" y="374.5" text-anchor="middle" font-size="7" fill="#333">6</text>
<text x="890.2" y="379.6" text-anchor="end" font-size="7" fill="#333">DK GRN/WHT</text>
<text x="906.0" y="385.8" text-anchor="middle" font-size="7" fill="#333">7</text>
<text x="890.2" y="415.3" text-anchor="end" font-size="7" fill="#333">PNK</text>
<text x="906.0" y="421.4" text-anchor="middle" font-size="7" fill="#333">8</text>
<text x="890.2" y="438.3" text-anchor="end" font-size="7" fill="#333">LT GRN</text>
<text x="906.0" y="444.4" text-anchor="middle" font-size="7" fill="#333">9</text>
<text x="890.2" y="497.5" text-anchor="end" font-size="7" fill="#333">RED/WHT</text>
<text x="906.0" y="503.4" text-anchor="middle" font-size="7" fill="#333">10</text>
<text x="890.2" y="603.0" text-anchor="end" font-size="7" fill="#333">PNK</text>
<text x="906.0" y="608.7" text-anchor="middle" font-size="7" fill="#333">11</text>
<text x="890.2" y="614.7" text-anchor="end" font-size="7" fill="#333">WHT</text>
<text x="906.0" y="620.4" text-anchor="middle" font-size="7" fill="#333">12</text>
<text x="890.2" y="626.4" text-anchor="end" font-size="7" fill="#333">WHT</text>
<text x="906.0" y="632.0" text-anchor="middle" font-size="7" fill="#333">13</text>
<text x="890.2" y="649.9" text-anchor="end" font-size="7" fill="#333">DK GRN</text>
<text x="906.0" y="655.5" text-anchor="middle" font-size="7" fill="#333">14</text>
<text x="890.2" y="661.7" text-anchor="end" font-size="7" fill="#333">GRY</text>
<text x="906.0" y="667.3" text-anchor="middle" font-size="7" fill="#333">15</text>
<text x="890.2" y="673.7" text-anchor="end" font-size="7" fill="#333">LT BLU</text>
<text x="906.0" y="679.2" text-anchor="middle" font-size="7" fill="#333">16</text>
<text x="890.2" y="685.3" text-anchor="end" font-size="7" fill="#333">YEL</text>
<text x="906.0" y="690.8" text-anchor="middle" font-size="7" fill="#333">17</text>
<text x="890.2" y="743.9" text-anchor="end" font-size="7" fill="#333">LT GRN</text>
<text x="906.0" y="749.3" text-anchor="middle" font-size="7" fill="#333">18</text>
<text x="890.2" y="755.8" text-anchor="end" font-size="7" fill="#333">TAN</text>
<text x="906.0" y="761.2" text-anchor="middle" font-size="7" fill="#333">19</text>
<text x="890.2" y="767.5" text-anchor="end" font-size="7" fill="#333">DK BLU</text>
<text x="906.0" y="772.8" text-anchor="middle" font-size="7" fill="#333">20</text>
<text x="890.2" y="779.1" text-anchor="end" font-size="7" fill="#333">BRN</text>
<text x="906.0" y="784.4" text-anchor="middle" font-size="7" fill="#333">21</text>
</g>
</svg>
</body></html>
